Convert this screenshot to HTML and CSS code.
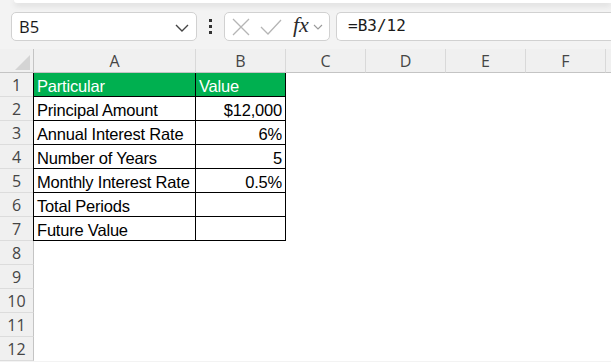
FILE: index.html
```html
<!DOCTYPE html>
<html lang="en">
<head>
  <meta charset="UTF-8">
  <title>Future Value - Sheet1</title>
  <link rel="stylesheet" href="styles.css">
</head>
<body>
  <!-- bottom edge of the ribbon -->
  <div class="ribbon"></div>

  <!-- Name box + formula bar -->
  <div class="formula-row">
    <div class="name-box">
      <span>B5</span>
      <svg width="14" height="8" viewBox="0 0 14 8"><path d="M1 1 L7 7 L13 1" fill="none" stroke="#444" stroke-width="1.4"/></svg>
    </div>
    <div class="dots"><i></i><i></i><i></i></div>
    <div class="fx-tools">
      <svg width="18" height="18" viewBox="0 0 18 18"><path d="M1 1 L17 17 M17 1 L1 17" stroke="#b5b5b5" stroke-width="1.3"/></svg>
      <svg width="22" height="16" viewBox="0 0 22 16"><path d="M1 8 L8 15 L21 1" fill="none" stroke="#b5b5b5" stroke-width="1.3"/></svg>
      <span class="fx">fx</span>
      <svg width="10" height="6" viewBox="0 0 10 6"><path d="M1 1 L5 5 L9 1" fill="none" stroke="#999" stroke-width="1.1"/></svg>
    </div>
    <div class="formula-box">=B3/12</div>
  </div>

  <!-- Worksheet -->
  <div class="sheet">
    <div class="corner"><span class="tri"></span></div>
    <div class="col-head">A</div>
    <div class="col-head">B</div>
    <div class="col-head">C</div>
    <div class="col-head">D</div>
    <div class="col-head">E</div>
    <div class="col-head">F</div>
    <div class="col-head last"></div>

    <div class="row-head">1</div>
    <div class="cell t a head">Particular</div>
    <div class="cell t head">Value</div>
    <div class="cell blank"></div>

    <div class="row-head">2</div>
    <div class="cell t a">Principal Amount</div>
    <div class="cell t num">$12,000</div>
    <div class="cell blank"></div>

    <div class="row-head">3</div>
    <div class="cell t a">Annual Interest Rate</div>
    <div class="cell t num">6%</div>
    <div class="cell blank"></div>

    <div class="row-head">4</div>
    <div class="cell t a">Number of Years</div>
    <div class="cell t num">5</div>
    <div class="cell blank"></div>

    <div class="row-head">5</div>
    <div class="cell t a">Monthly Interest Rate</div>
    <div class="cell t num">0.5%</div>
    <div class="cell blank"></div>

    <div class="row-head">6</div>
    <div class="cell t a">Total Periods</div>
    <div class="cell t num"></div>
    <div class="cell blank"></div>

    <div class="row-head">7</div>
    <div class="cell t a">Future Value</div>
    <div class="cell t num"></div>
    <div class="cell blank"></div>

    <div class="row-head">8</div><div class="cell empty"></div>
    <div class="row-head">9</div><div class="cell empty"></div>
    <div class="row-head">10</div><div class="cell empty"></div>
    <div class="row-head">11</div><div class="cell empty"></div>
    <div class="row-head">12</div><div class="cell empty"></div>
  </div>
</body>
</html>
```

FILE: styles.css
```css
/* Base */
body {
  margin: 0;
  width: 611px;
  height: 362px;
  overflow: hidden;
  background: #f3f3f3;
  font-family: "Liberation Sans", Arial, sans-serif;
  color: #000;
}

/* Ribbon edge */
.ribbon {
  height: 3px;
  margin-left: 14px;
  background: #fff;
  border-bottom-left-radius: 6px;
  box-shadow: 0 2px 6px rgba(0,0,0,0.16);
}

/* Formula row */
.formula-row {
  display: flex;
  align-items: center;
  height: 29px;
  margin-top: 9px;
  padding-left: 11px;
}
.name-box {
  box-sizing: border-box;
  width: 186px;
  height: 29px;
  display: flex;
  align-items: center;
  justify-content: space-between;
  padding: 0 7px 0 7px;
  background: #fff;
  border: 1px solid #d1d1d1;
  border-radius: 5px;
  font-family: "Open Sans", sans-serif;
  font-size: 16.5px;
  color: #1a1a1a;
}
.name-box svg { margin-top: 2px; }
.dots {
  width: 27px;
  display: flex;
  flex-direction: column;
  align-items: center;
  gap: 3px;
}
.dots i {
  display: block;
  width: 3px;
  height: 3px;
  background: #333;
}
.fx-tools {
  box-sizing: border-box;
  width: 106px;
  height: 29px;
  display: flex;
  align-items: center;
  gap: 10px;
  padding-left: 7px;
  background: #fff;
  border: 1px solid #d1d1d1;
  border-radius: 5px;
}
.fx-tools .fx {
  font-family: "Liberation Serif", serif;
  font-style: italic;
  font-size: 22px;
  color: #2b2b2b;
  margin-left: 1px;
  margin-right: -6px;
  margin-top: -3px;
}
.formula-box {
  box-sizing: border-box;
  flex: 1;
  height: 29px;
  margin-left: 6px;
  padding: 3px 0 0 11px;
  background: #fff;
  border: 1px solid #d1d1d1;
  border-right: none;
  border-radius: 5px 0 0 5px;
  font-family: "DejaVu Sans Mono", monospace;
  font-size: 16px;
  color: #1a1a1a;
}

/* Worksheet grid */
.sheet {
  margin-top: 8px;
  display: grid;
  grid-template-columns: 34px 162px 90px 80px 80px 80px 80px 1fr;
  grid-auto-rows: 24px;
  background: #fff;
}
.corner,
.col-head,
.row-head {
  box-sizing: border-box;
  background: #f0f0f0;
  font-family: "Open Sans", sans-serif;
  font-size: 16px;
  color: #454545;
  display: flex;
  align-items: center;
  justify-content: center;
}
.corner {
  position: relative;
  border-right: 1px solid #c4c4c4;
  border-bottom: 1px solid #c4c4c4;
}
.corner .tri {
  position: absolute;
  right: 3px;
  bottom: 2px;
  width: 0;
  height: 0;
  border-left: 15px solid transparent;
  border-bottom: 15px solid #d4d4d4;
}
.col-head {
  border-right: 1px solid #d9d9d9;
  border-bottom: 1px solid #c4c4c4;
}
.col-head.last { border-right: none; }
.row-head {
  grid-column: 1;
  border-right: 1px solid #c4c4c4;
  border-bottom: 1px solid #dcdcdc;
}

.cell {
  box-sizing: border-box;
  font-size: 16.5px;
  line-height: 22px;
  padding: 2px 3px 0;
  white-space: nowrap;
  letter-spacing: -0.2px;
  overflow: hidden;
}
.cell.t {
  border-right: 1px solid #000;
  border-bottom: 1px solid #000;
}
.cell.a { border-left: 1px solid #000; margin-left: -1px; }
.cell.head {
  background: #00b050;
  color: #fff;
}
.cell.num { text-align: right; }
.cell.blank { grid-column: 4 / -1; }
.cell.empty { grid-column: 2 / -1; }
```
